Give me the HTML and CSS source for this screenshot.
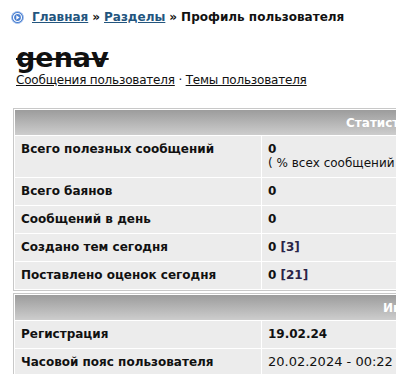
FILE: index.html
```html
<!DOCTYPE html>
<html lang="ru">
<head>
    <meta charset="UTF-8">
    <title>Профиль пользователя</title>
    <link rel="stylesheet" href="styles.css">
</head>
<body>
    <div class="crumbs">
        <svg class="crumbs-icon" width="13" height="13" viewBox="0 0 13 13">
            <circle cx="6.5" cy="6.5" r="6" fill="#4a7fd0" stroke="#a9c4ee" stroke-width="1"/>
            <circle cx="6.5" cy="6.5" r="4" fill="none" stroke="#fff" stroke-width="1.2"/>
            <path d="M5.3 4.3 L8.6 6.5 L5.3 8.7 Z" fill="#fff"/>
        </svg>
        <a href="#">Главная</a> &raquo; <a href="#">Разделы</a> &raquo; <span>Профиль пользователя</span>
    </div>

    <h1 class="username"><s>genav</s></h1>
    <div class="user-links">
        <a href="#">Сообщения пользователя</a> &middot; <a href="#">Темы пользователя</a>
    </div>

    <table class="profile-table stats">
        <tr><th colspan="2">Статистика</th></tr>
        <tr>
            <td class="label">Всего полезных сообщений</td>
            <td class="value"><b>0</b><br>( % всех сообщений )</td>
        </tr>
        <tr>
            <td class="label">Всего баянов</td>
            <td class="value"><b>0</b></td>
        </tr>
        <tr>
            <td class="label">Сообщений в день</td>
            <td class="value"><b>0</b></td>
        </tr>
        <tr>
            <td class="label">Создано тем сегодня</td>
            <td class="value"><b>0 <span class="limit">[3]</span></b></td>
        </tr>
        <tr>
            <td class="label">Поставлено оценок сегодня</td>
            <td class="value"><b>0 <span class="limit">[21]</span></b></td>
        </tr>
    </table>

    <table class="profile-table info">
        <tr><th colspan="2">Информация</th></tr>
        <tr>
            <td class="label">Регистрация</td>
            <td class="value"><b>19.02.24</b></td>
        </tr>
        <tr>
            <td class="label">Часовой пояс пользователя</td>
            <td class="value time">20.02.2024 - 00:22</td>
        </tr>
    </table>
</body>
</html>
```

FILE: styles.css
```css
body {
    font-family: 'DejaVu Sans', Verdana, sans-serif;
    font-size: 12px;
    color: #111;
    background-color: #fff;
    margin: 0;
    padding: 10px 13px;
    overflow: hidden;
}
a {
    color: #111;
}
.crumbs {
    font-weight: bold;
    font-size: 12px;
    display: flex;
    align-items: center;
    white-space: nowrap;
    gap: 4px;
}
.crumbs-icon {
    margin-left: -2px;
    margin-right: 4px;
}
.crumbs a {
    color: #23557e;
}
.username {
    font-size: 27px;
    margin: 20px 0 0 3px;
    line-height: 28px;
}
.username s {
    text-decoration-thickness: 2px;
}
.user-links {
    margin-left: 3px;
    line-height: 16px;
    letter-spacing: -0.2px;
}
.profile-table {
    border: 1px solid #c8c8c8;
    border-spacing: 1px;
    background-color: #fff;
    margin-top: 20px;
}
.profile-table + .profile-table {
    margin-top: 2px;
}
.stats {
    width: 744px;
}
.info {
    width: 830px;
}
.profile-table th {
    height: 25px;
    padding: 0;
    color: #fff;
    font-size: 12px;
    background: linear-gradient(#9c9c9c, #cdcdcd);
    text-align: center;
}
.profile-table td {
    background-color: #ececec;
    padding: 6px 6px 7px;
    line-height: 14px;
    vertical-align: top;
}
.profile-table .label {
    width: 234px;
    font-weight: bold;
}
.profile-table .value {
    white-space: nowrap;
}
.profile-table .time {
    font-size: 13px;
    line-height: 14px;
}
.limit {
    color: #2a2447;
}
```
